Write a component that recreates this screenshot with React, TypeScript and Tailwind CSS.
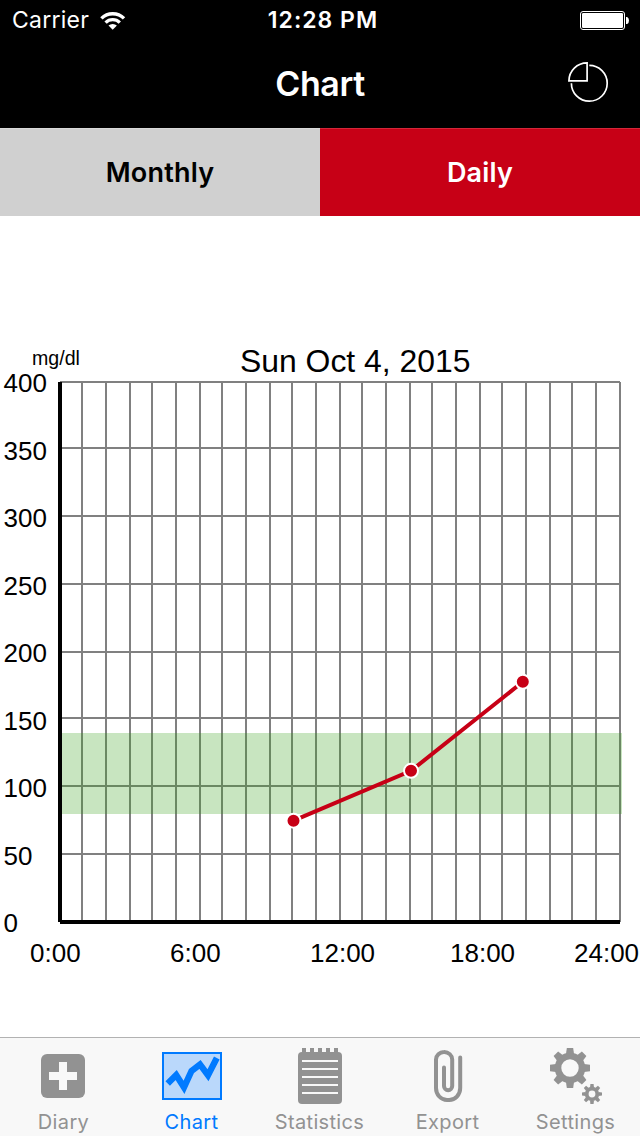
import type { ReactNode } from "react";

const snap = (v: number) => Math.floor(v / 2) * 2;
const PLOT = { left: 60, right: 620, top: 382, bottom: 922 };
const OFFSET_Y = 216;

const hours = Array.from({ length: 24 }, (_, i) => snap(60 + ((i + 1) * 560) / 24));
const levels = Array.from({ length: 8 }, (_, i) => snap(382 + i * 67.5));

const yLabels = [
  { text: "400", y: 392 },
  { text: "350", y: 460 },
  { text: "300", y: 527 },
  { text: "250", y: 595 },
  { text: "200", y: 662 },
  { text: "150", y: 730 },
  { text: "100", y: 797 },
  { text: "50", y: 865 },
  { text: "0", y: 932 },
];

const xLabels = [
  { text: "0:00", x: 30 },
  { text: "6:00", x: 170 },
  { text: "12:00", x: 310 },
  { text: "18:00", x: 450 },
  { text: "24:00", x: 574 },
];

const readings = [
  { x: 293.5, y: 820.7 },
  { x: 411, y: 770.8 },
  { x: 522.8, y: 681.8 },
];

function WifiIcon() {
  return (
    <svg width="26" height="20" viewBox="100 10 26 20" fill="none" stroke="white">
      <path d="M101.4 17.4A16 16 0 0 1 124 17.4" strokeWidth="3.4" />
      <path d="M105.6 21.6A10 10 0 0 1 119.8 21.6" strokeWidth="3.3" />
      <path d="M112.7 28.8L108.5 24.6A6 6 0 0 1 116.9 24.6Z" fill="white" stroke="none" />
    </svg>
  );
}

function BatteryIcon() {
  return (
    <svg width="50" height="20" viewBox="580 11 50 20">
      <rect x="580.5" y="11.5" width="44" height="18" rx="2.5" fill="none" stroke="white" />
      <rect x="582" y="13" width="41" height="15" rx="1.2" fill="white" />
      <path d="M626 17h1.2q1.8 1 1.8 3.5t-1.8 3.5H626Z" fill="white" />
    </svg>
  );
}

function PieIcon() {
  return (
    <svg width="42" height="42" viewBox="567 61 42 42" fill="none" stroke="white" strokeWidth="1.7">
      <path d="M589.3 65.4A17.9 17.9 0 1 1 571.4 83.2" />
      <path d="M587.1 62.9V80.9H568.9A18.2 18.2 0 0 1 587.1 62.9Z" />
    </svg>
  );
}

function DailyChart() {
  return (
    <svg
      width="640"
      height="821"
      viewBox={`0 ${OFFSET_Y} 640 821`}
      className="block font-['Liberation_Sans',sans-serif]"
    >
      <g stroke="#808080" strokeWidth="2">
        {levels.map((y) => (
          <line key={y} x1={PLOT.left} x2={PLOT.right} y1={y} y2={y} />
        ))}
        {hours.map((x) => (
          <line key={x} x1={x} x2={x} y1={PLOT.top} y2={PLOT.bottom} />
        ))}
      </g>
      <g stroke="#000" strokeWidth="4">
        <line x1={PLOT.left} x2={PLOT.left} y1={PLOT.top} y2={PLOT.bottom} />
        <line x1={PLOT.left} x2={PLOT.right} y1={PLOT.bottom} y2={PLOT.bottom} />
      </g>
      <rect x="62" y="733" width="560" height="81" fill="rgb(51,159,22)" fillOpacity="0.27" />
      <polyline
        points={readings.map((p) => `${p.x},${p.y}`).join(" ")}
        fill="none"
        stroke="#c70016"
        strokeWidth="4"
      />
      {readings.map((p) => (
        <circle key={p.x} cx={p.x} cy={p.y} r="7" fill="#c70016" stroke="white" strokeWidth="2" />
      ))}
      <g fontSize="26">
        {yLabels.map((l) => (
          <text key={l.text} x="3.5" y={l.y}>{l.text}</text>
        ))}
        {xLabels.map((l) => (
          <text key={l.text} x={l.x} y="962">{l.text}</text>
        ))}
      </g>
      <text x="32" y="365" fontSize="19.6">mg/dl</text>
      <text x="240" y="372" fontSize="31.9">Sun Oct 4, 2015</text>
    </svg>
  );
}

function DiaryIcon() {
  return (
    <svg width="60" height="60" viewBox="34 1046 60 60">
      <rect x="41" y="1054" width="44" height="44" rx="6" fill="#929292" />
      <path d="M59 1062h8v10h10v8H67v10h-8v-10H49v-8h10z" fill="#f8f8f8" />
    </svg>
  );
}

function ChartIcon() {
  return (
    <svg width="60" height="60" viewBox="162 1046 60 60">
      <rect x="163" y="1053" width="58" height="46" fill="#bad8fb" stroke="#007aff" strokeWidth="2" />
      <path
        d="M167.7 1083.5L176.2 1075L184 1087.3L191.5 1071L200 1064.4L208 1075.2L216.8 1058"
        fill="none"
        stroke="#007aff"
        strokeWidth="6.3"
      />
    </svg>
  );
}

function StatisticsIcon() {
  return (
    <svg width="60" height="60" viewBox="290 1046 60 60">
      <rect x="298" y="1052" width="44" height="52" rx="4" fill="#929292" />
      {[302, 310, 318, 326, 334].map((x) => (
        <rect key={x} x={x} y="1048" width="4" height="5" fill="#929292" />
      ))}
      {[1060, 1068, 1076, 1084, 1092].map((y) => (
        <rect key={y} x="302" y={y} width="36" height="2" fill="#f8f8f8" />
      ))}
    </svg>
  );
}

function ExportIcon() {
  return (
    <svg width="60" height="60" viewBox="418 1046 60 60">
      <path
        d="M460.2 1057.5V1088A11 12 0 0 1 449 1100H447A11 12 0 0 1 436 1088V1059.5A8 7.6 0 0 1 444 1052A8 7.6 0 0 1 452.2 1059.5V1086A4.1 4.2 0 0 1 444 1086V1067.5"
        fill="none"
        stroke="#929292"
        strokeWidth="4"
        strokeLinecap="round"
      />
    </svg>
  );
}

const teeth = [0, 45, 90, 135, 180, 225, 270, 315];

function SettingsIcon() {
  return (
    <svg width="60" height="60" viewBox="546 1046 60 60" fill="#929292">
      <g transform="translate(570 1068)">
        <circle r="12" fill="none" stroke="#929292" strokeWidth="6.6" />
        {teeth.map((a) => (
          <path key={a} d="M-4 -14L-3.2 -20H3.2L4 -14Z" transform={`rotate(${a})`} />
        ))}
      </g>
      <g transform="translate(592 1094)">
        <circle r="5.3" fill="none" stroke="#929292" strokeWidth="3.8" />
        {teeth.map((a) => (
          <path key={a} d="M-2 -6.5L-1.6 -10H1.6L2 -6.5Z" transform={`rotate(${a})`} />
        ))}
      </g>
    </svg>
  );
}

function Tab({ label, icon, active = false }: { label: string; icon: ReactNode; active?: boolean }) {
  return (
    <button
      className={`flex flex-1 flex-col items-center pt-2 text-[20px] leading-6 tracking-[0.35px] ${
        active ? "text-[#007aff]" : "text-[#929292]"
      }`}
    >
      {icon}
      <span className="mt-1 -ml-px">{label}</span>
    </button>
  );
}

export default function App() {
  return (
    <div className="flex h-[1136px] w-[640px] flex-col overflow-hidden bg-white font-['Inter',sans-serif]">
      <header className="h-32 bg-black text-white">
        <div className="grid h-10 grid-cols-3 items-center pt-px">
          <div className="flex items-center gap-[11px] pl-3">
            <span className="text-[23px] leading-[39px] tracking-[0.25px]">Carrier</span>
            <WifiIcon />
          </div>
          <span className="pl-1.5 text-center text-[23px] leading-[39px] font-semibold tracking-[1px]">12:28 PM</span>
          <div className="flex justify-end pr-2.5 pt-px">
            <BatteryIcon />
          </div>
        </div>
        <div className="grid h-[88px] grid-cols-3 items-center">
          <span />
          <h1 className="text-center text-[34px] leading-[88px] font-semibold tracking-[-0.4px]">Chart</h1>
          <div className="flex justify-end pr-[31px] pb-1">
            <PieIcon />
          </div>
        </div>
      </header>
      <div className="grid h-[88px] grid-cols-2 text-[27px] font-semibold">
        <button className="border-t border-[#dadada] bg-[#d0d0d0] pt-0.5 tracking-[0.2px] text-black">Monthly</button>
        <button className="border-t border-[#d32739] bg-[#c70016] pt-0.5 tracking-[0.2px] text-white">Daily</button>
      </div>
      <main className="h-[821px]">
        <DailyChart />
      </main>
      <nav className="flex h-[99px] border-t border-[#b2b2b2] bg-[#f8f8f8]">
        <Tab label="Diary" icon={<DiaryIcon />} />
        <Tab label="Chart" icon={<ChartIcon />} active />
        <Tab label="Statistics" icon={<StatisticsIcon />} />
        <Tab label="Export" icon={<ExportIcon />} />
        <Tab label="Settings" icon={<SettingsIcon />} />
      </nav>
    </div>
  );
}
